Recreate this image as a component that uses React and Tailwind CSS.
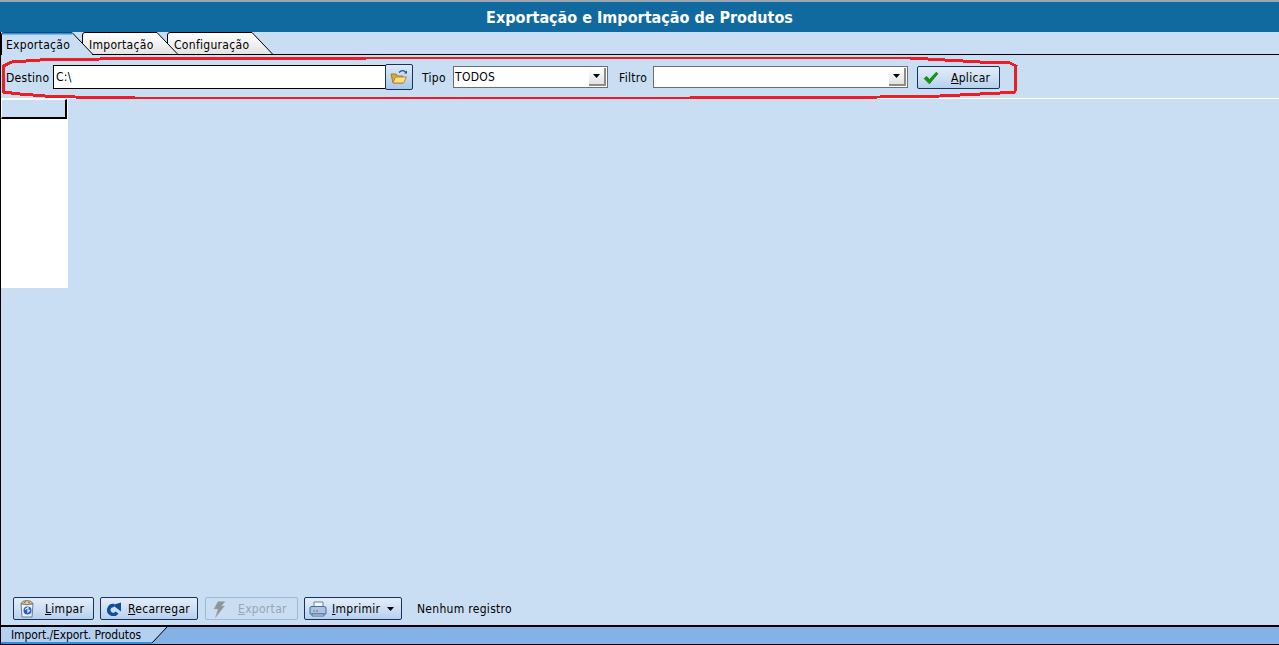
import React from 'react';

const font = 'font-["DejaVu_Sans_Condensed","DejaVu_Sans",sans-serif] [font-stretch:condensed]';

// aba com canto direito inclinado
function Tab({ label, width, active, labelClass, className }) {
  const w = width;
  const fill = active ? '#c9def3' : 'url(#tabGrad)';
  return (
    <div className={`relative h-[22px] shrink-0 ${className}`} style={{ width: w }}>
      <svg className="absolute inset-0" width={w} height="23" viewBox={`0 0 ${w} 23`}>
        <defs>
          <linearGradient id="tabGrad" x1="0" y1="0" x2="0" y2="1">
            <stop offset="0" stopColor="#ffffff" />
            <stop offset="1" stopColor="#e4e4e4" />
          </linearGradient>
        </defs>
        <path
          d={`M0.5 22 V3 Q0.5 0.5 3 0.5 H${w - 21} L${w - 0.5} 22`}
          fill={fill}
          stroke="#000"
          strokeWidth="1"
        />
        {active && <path d={`M2 1.5 H${w - 21}`} stroke="#2f8fe6" strokeWidth="2" />}
        {active && <path d={`M1 22.5 H${w - 1}`} stroke="#c9def3" strokeWidth="1" />}
      </svg>
      <span className={`absolute top-[6px] text-[12px] leading-[14px] tracking-[0.3px] text-black whitespace-nowrap ${labelClass}`}>{label}</span>
    </div>
  );
}

function Btn({ width, disabled, icon, children, gap = 'pl-[31px]' }) {
  return (
    <div
      className={`relative h-[23px] shrink-0 rounded-[2px] border text-[12px] leading-[22px] tracking-[0.3px] ${disabled ? 'border-[#9db9d8] text-[#9aa5b1] bg-[#c9def3]' : 'border-[#16335c] text-black bg-gradient-to-b from-[#e2edf9] via-[#cfe0f3] to-[#b7d0ee]'} ${gap}`}
      style={{ width }}
    >
      <span className="absolute left-[4px] top-[2px] w-[18px] h-[18px] flex items-center justify-center">{icon}</span>
      {children}
    </div>
  );
}

function DropArrow() {
  return (
    <div className="absolute right-[1px] top-[1px] bottom-[1px] w-[17px] bg-gradient-to-b from-[#ffffff] to-[#e2e2e2] border-r-2 border-b-2 border-[#8c8c8c] flex items-center justify-center">
      <svg width="8" height="4" viewBox="0 0 8 4"><path d="M0 0H7L3.5 4Z" fill="#000" /></svg>
    </div>
  );
}

const FolderIcon = (
  <svg width="18" height="16" viewBox="0 0 18 16">
    <path d="M1 5H6L7.500 7H13V14H3Z" fill="#d9a93a" stroke="#a67c1e" strokeWidth="1" />
    <path d="M3 14L5.500 8H16.500L13.500 14Z" fill="#f8e08a" stroke="#b98d2a" strokeWidth="1" />
    <path d="M9 3.500Q12 0.500 15 2.500L16 4" fill="none" stroke="#1f4f96" strokeWidth="1.300" />
    <path d="M14 4.500H17V1.500Z" fill="#1f4f96" />
  </svg>
);

const CheckIcon = (
  <svg width="16" height="14" viewBox="0 0 15 13">
    <path d="M1 7L3.500 5L6 8L12.500 1L14 2.500L6 12Z" fill="#0a9e0a" stroke="#066a06" strokeWidth="0.600" />
  </svg>
);

const BinIcon = (
  <svg width="16" height="18" viewBox="0 0 16 18">
    <path d="M2 4H14L13 17H3Z" fill="#eef2f8" stroke="#6d7a90" strokeWidth="1" />
    <path d="M2 3.500Q3 0.500 8 0.500Q13 0.500 14 3.500Q8 6 2 3.500Z" fill="#d8c99a" stroke="#6d6650" strokeWidth="0.800" />
    <path d="M5 2.500L7 1.500M9 2L11 3" stroke="#7d7355" strokeWidth="1" />
    <circle cx="8.500" cy="10.500" r="4" fill="#1f5fd0" />
    <path d="M6 9.500L9 7.500V12L11 10" fill="none" stroke="#e6eefc" strokeWidth="1.200" />
  </svg>
);

const ReloadIcon = (
  <svg width="16" height="14" viewBox="0 0 16 14">
    <path d="M8 3.500A4.500 4.500 0 1 0 11 10.500" fill="none" stroke="#0d4f9e" strokeWidth="3.500" />
    <path d="M6.500 3L15 0.500V9.500Z" fill="#0d4f9e" />
  </svg>
);

const BoltIcon = (
  <svg width="14" height="17" viewBox="0 0 14 17">
    <path d="M6 0.500H13L9.500 5H12.500L3.500 16.500L6 8H2Z" fill="#8f9499" stroke="#a9aeb3" strokeWidth="0.500" />
  </svg>
);

const PrinterIcon = (
  <svg width="18" height="16" viewBox="0 0 18 16">
    <path d="M5 1H14V6H5Z" fill="#f4f7fb" stroke="#66809f" strokeWidth="1" />
    <path d="M1 7Q1 5.500 3 5.500H15Q17 5.500 17 7V13H1Z" fill="#a9c4e4" stroke="#4a6c96" strokeWidth="1" />
    <path d="M3 13H15V15H3Z" fill="#dce7f3" stroke="#4a6c96" strokeWidth="1" />
    <path d="M4 10H6" stroke="#3aa83a" strokeWidth="1.200" />
    <path d="M7 10H9" stroke="#d64545" strokeWidth="1.200" />
  </svg>
);

export default function App() {
  return (
    <div className={`relative w-[1279px] h-[645px] overflow-hidden flex flex-col bg-[#c9def3] ${font}`}>
      {/* Título */}
      <div className="h-[32px] shrink-0 border-t-2 border-[#9aa6b2] bg-[#106a9f] text-center text-white font-bold text-[16px] leading-[31px]">
        Exportação e Importação de Produtos
      </div>

      <div className="flex-1 min-h-0 flex flex-col border-l border-black">
        {/* Abas: z-index deixa a aba da esquerda por cima */}
        <div className="h-[23px] shrink-0 flex border-b border-black">
          <Tab label="Exportação" width={92} labelClass="left-[5px]" active className="z-30" />
          <Tab label="Importação" width={96} labelClass="left-[7px]" className="z-20 ml-[-11px]" />
          <Tab label="Configuração" width={106} labelClass="left-[7px]" className="z-10 ml-[-11px]" />
        </div>

        {/* Barra de filtros */}
        <div className="h-[44px] shrink-0 flex items-center border-b border-white text-[12px] tracking-[0.3px] text-black pl-[5px] pt-[1px]">
          <span className="w-[47px] pt-[1px]">Destino</span>
          <div className="w-[333px] h-[24px] bg-white border border-black pl-[2px] leading-[23px]">C:\</div>
          <div className="w-[28px] h-[26px] -ml-[1px] rounded-[2px] border border-[#16335c] bg-gradient-to-b from-[#dce9f7] to-[#a9c6ea] flex items-center justify-center">
            {FolderIcon}
          </div>
          <span className="ml-[9px] w-[31px] pt-[1px]">Tipo</span>
          <div className="relative w-[155px] h-[22px] bg-white border border-[#6d6d6d] pl-[1px] leading-[20px]">
            TODOS
            <DropArrow />
          </div>
          <span className="ml-[11px] w-[34px] pt-[1px]">Filtro</span>
          <div className="relative w-[255px] h-[22px] bg-white border border-[#6d6d6d]">
            <DropArrow />
          </div>
          <div className="ml-[9px]">
            <Btn width={83} icon={CheckIcon} gap="pl-[33px]"><span className="underline">A</span>plicar</Btn>
          </div>
        </div>

        {/* Grade vazia */}
        <div className="flex-1 min-h-0">
          <div className="w-[67px] h-[189px] bg-white">
            <div className="w-[66px] h-[20px] bg-[#c9def3] border-t border-l border-t-white border-l-white border-r-2 border-b-2 border-r-black border-b-black" />
          </div>
        </div>

        {/* Botões inferiores */}
        <div className="h-[28px] shrink-0 flex items-start gap-[6px] pl-[12px] text-[12px]">
          <Btn width={81} icon={BinIcon}><span className="underline">L</span>impar</Btn>
          <Btn width={98} icon={ReloadIcon} gap="pl-[27px]"><span className="underline">R</span>ecarregar</Btn>
          <div className="ml-[1px]">
            <Btn width={93} disabled icon={BoltIcon} gap="pl-[32px]"><span className="underline">E</span>xportar</Btn>
          </div>
          <Btn width={98} icon={PrinterIcon} gap="pl-[27px]">
            <span className="underline">I</span>mprimir
            <svg className="absolute right-[6px] top-[9px]" width="8" height="4" viewBox="0 0 8 4"><path d="M0 0H7L3.500 4Z" fill="#000" /></svg>
          </Btn>
          <span className="ml-[9px] leading-[24px] tracking-[0.3px] text-black">Nenhum registro</span>
        </div>

        {/* Barra de status */}
        <div className="h-[20px] shrink-0 border-t-2 border-b border-black bg-[#84b2e6] relative">
          <svg className="absolute left-0 top-0" width="170" height="17" viewBox="0 0 170 17">
            <path d="M0 0H166L151 15H0Z" fill="#b3d0f0" />
            <path d="M166 0L151 16" stroke="#000" strokeWidth="1" fill="none" />
            <path d="M0 16H151" stroke="#2f8fe6" strokeWidth="2" />
          </svg>
          <span className="absolute left-[10px] top-[1px] text-[12px] leading-[14px] tracking-[-0.1px] text-black">Import./Export. Produtos</span>
        </div>
      </div>

      {/* Anotação vermelha sobre a tela */}
      <svg className="absolute left-0 top-0 z-40 pointer-events-none" width="1279" height="110" viewBox="0 0 1279 110" fill="none" shapeRendering="crispEdges">
        <path
          d="M3 66L12 62L40 60L100 59L370 58L910 58L980 62L1010 63L1016 66L1015 92L1000 93L940 96L880 97L690 98L135 98L75 97L45 96L20 94L3 92Z"
          stroke="#ee1c25"
          strokeWidth="3"
        />
      </svg>
    </div>
  );
}
